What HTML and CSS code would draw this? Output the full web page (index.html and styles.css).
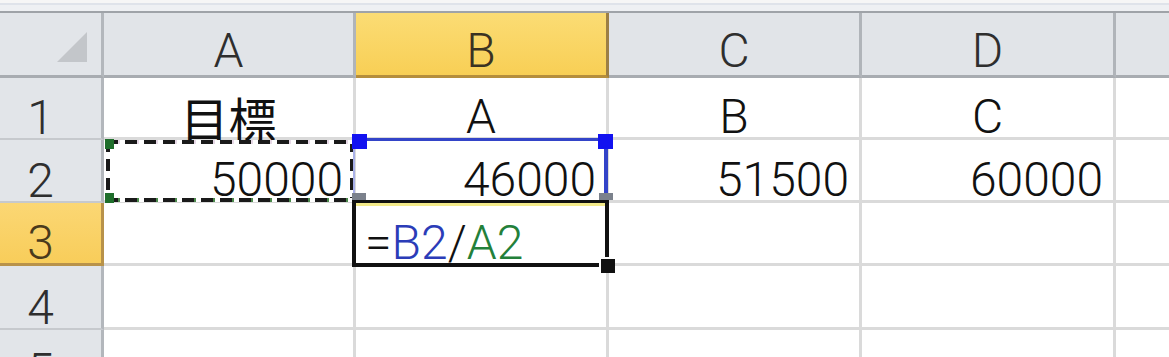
FILE: index.html
```html
<!DOCTYPE html>
<html lang="ja">
<head>
<meta charset="utf-8">
<title>Excel sheet</title>
<link rel="stylesheet" href="styles.css">
</head>
<body>
<div class="sheet">
  <div class="topbar"></div>
  <div class="grid">
    <div class="corner"><span class="tri"></span></div>
    <div class="colhead">A</div>
    <div class="colhead sel">B</div>
    <div class="colhead">C</div>
    <div class="colhead">D</div>
    <div class="colhead edge"></div>

    <div class="rowhead">1</div>
    <div class="cell center jp">目標</div>
    <div class="cell center">A</div>
    <div class="cell center">B</div>
    <div class="cell center">C</div>
    <div class="cell edge"></div>

    <div class="rowhead">2</div>
    <div class="cell num over1">50000
      <span class="ants"></span>
      <span class="sq g tl"></span><span class="sq g bl"></span>
    </div>
    <div class="cell num over2">46000
      <span class="ref-blue"></span>
      <span class="sq b tl"></span><span class="sq b tr"></span>
      <span class="sq gr bl"></span><span class="sq gr br"></span>
    </div>
    <div class="cell num">51500</div>
    <div class="cell num">60000</div>
    <div class="cell edge"></div>

    <div class="rowhead sel">3</div>
    <div class="cell"></div>
    <div class="cell edit"><span class="formula">=<span class="rb">B2</span>/<span class="rg">A2</span></span>
      <span class="editbox"></span>
      <span class="handle"></span>
    </div>
    <div class="cell"></div>
    <div class="cell"></div>
    <div class="cell edge"></div>

    <div class="rowhead">4</div>
    <div class="cell"></div>
    <div class="cell"></div>
    <div class="cell"></div>
    <div class="cell"></div>
    <div class="cell edge"></div>

    <div class="rowhead">5</div>
    <div class="cell"></div>
    <div class="cell"></div>
    <div class="cell"></div>
    <div class="cell"></div>
    <div class="cell edge"></div>
  </div>
</div>
</body>
</html>
```

FILE: styles.css
```css
* { box-sizing: border-box; }
html, body { margin: 0; padding: 0; background: #ffffff; }
body { width: 1169px; height: 357px; overflow: hidden; }

.sheet {
  font-family: "Roboto", "Liberation Sans", "Noto Sans CJK JP", sans-serif;
  font-weight: 300;
  font-size: 48px;
  color: #111;
}

.topbar {
  height: 13px;
  background: linear-gradient(#f6f6f6 0 3px, #dfe3ea 3px 5px, #eef0f3 5px 11px, #9fa3a8 11px 13px);
}

.grid {
  display: grid;
  grid-template-columns: 104px 252px 253px 253px 254px 1fr;
  grid-template-rows: 65px 62px 63px 63px 64px 63px;
}

.corner, .colhead, .rowhead, .cell {
  display: flex;
  align-items: flex-end;
  line-height: 40px;
  position: relative;
}

.corner {
  background: #e2e5e9;
  border-right: 3px solid #b3b7bc;
  border-bottom: 3px solid #a8acb1;
}
.tri {
  position: absolute;
  right: 14px;
  bottom: 13px;
  width: 0; height: 0;
  border-style: solid;
  border-width: 0 0 30px 30px;
  border-color: transparent transparent #c3c6ca transparent;
}

.colhead {
  justify-content: center;
  background: #e1e4e8;
  color: #2e2e2e;
  border-right: 3px solid #b0b4b9;
  border-bottom: 3px solid #a8acb1;
  padding-bottom: 4px;
}
.colhead.sel {
  background: linear-gradient(#fbdc74, #f8cf55);
  border-bottom-color: #b58e3c;
  border-right-color: #9c7f45;
  color: #3a3222;
}
.colhead.edge { border-right: 0; }

.rowhead {
  justify-content: center;
  padding-right: 20px;
  background: #e2e5e9;
  color: #2e2e2e;
  border-right: 3px solid #b3b7bc;
  border-bottom: 2px solid #c6c9cd;
}
.rowhead.sel {
  background: linear-gradient(#fbd774, #f8cd5a);
  border-bottom: 3px solid #b8924a;
  border-right-color: #b8924a;
  color: #4a3a1c;
}

.cell {
  border-right: 3px solid #dadada;
  border-bottom: 3px solid #dadada;
  background: #fff;
}
.cell.edge { border-right: 0; }
.cell.center { justify-content: center; }
.cell.num { justify-content: flex-end; padding-right: 10px; }
.cell.jp {
  font-family: "Noto Sans CJK JP", sans-serif;
  font-weight: 400;
  font-size: 48px;
}
.cell.over1 { z-index: 1; }
.cell.over2 { z-index: 2; }
.cell.edit { z-index: 3; }

/* marching ants on A2 */
.ants {
  position: absolute;
  left: 2px; top: 0; right: -1px; bottom: -2px;
  background:
    repeating-linear-gradient(90deg, #1a1a1a 0 12px, #e6d8e6 12px 14px, #ffffff 14px 19px) left top / 100% 4px no-repeat,
    repeating-linear-gradient(90deg, #1a1a1a 0 12px, #4d8a4d 12px 14px, #ffffff 14px 19px) left bottom / 100% 4px no-repeat,
    repeating-linear-gradient(180deg, #1a1a1a 0 12px, #ffffff 12px 19px) left top / 4px 100% no-repeat,
    repeating-linear-gradient(180deg, #1a1a1a 0 12px, #ffffff 12px 19px) right top / 4px 100% no-repeat;
}
.sq {
  position: absolute;
  width: 9px; height: 10px;
}
.sq.g { background: #1f6e2b; }
.sq.g.tl { left: 1px; top: -1px; }
.sq.g.bl { left: 1px; bottom: -3px; }

/* B2 reference highlight */
.ref-blue {
  position: absolute;
  left: -3px; top: -2px; right: -2px; bottom: -3px;
  border-top: 3px solid #3344c8;
  border-right: 4px solid #3344c8;
  border-left: 2px solid #a8b0e8;
}
.sq.b { background: #1212f0; width: 15px; height: 15px; }
.sq.b.tl { left: -4px; top: -6px; }
.sq.b.tr { right: -7px; top: -6px; }
.sq.gr { background: #7b818c; width: 14px; height: 7px; }
.sq.gr.bl { left: -4px; bottom: 0; }
.sq.gr.br { right: -7px; bottom: 0; }

/* B3 editing cell */
.cell.edit { padding-left: 9px; }
.formula { position: relative; z-index: 2; color: #111; }
.rb { color: #2b3cb8; }
.rg { color: #23803a; }
.editbox {
  position: absolute;
  left: -4px; top: -3px; right: -3px; bottom: -4px;
  border: 4px solid #111;
  border-top-width: 3px;
  box-shadow: inset 0 3px 0 #f3ea8a;
}
.handle {
  position: absolute;
  right: -9px; bottom: -10px;
  width: 16px; height: 16px;
  background: #111;
  border: 2px solid #fff;
  border-right: 0; border-bottom: 0;
}
```
